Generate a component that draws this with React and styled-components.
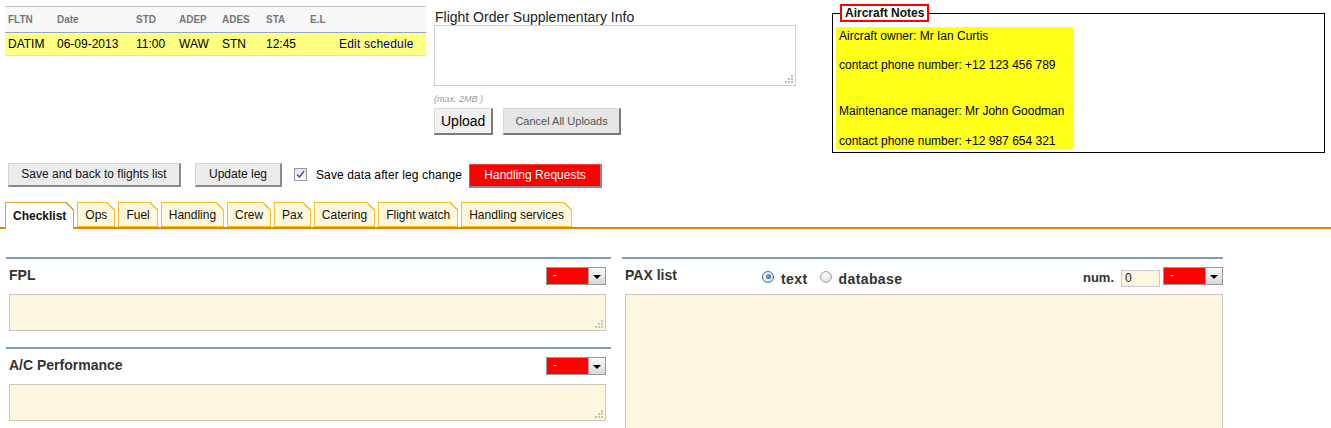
import styled, { createGlobalStyle } from "styled-components";

const GlobalStyle = createGlobalStyle`
    body {
        margin: 0;
        background: #fff;
        font-family: "Liberation Sans", Arial, sans-serif;
        font-size: 12px;
        color: #000;
    }
`;

const Page = styled.div`
    width: 1331px;
    height: 428px;
    overflow: hidden;
`;

const TopRow = styled.div`
    display: flex;
    align-items: flex-start;
    padding-left: 5px;
`;

const FlightTable = styled.div`
    width: 421px;
    margin-top: 6px;
    border-top: 1px solid #c4c4c4;
`;

const cols = "49px 79px 43px 43px 44px 44px 29px 1fr";

const HeadRow = styled.div`
    display: grid;
    grid-template-columns: ${cols};
    height: 25px;
    align-items: center;
    background: #f8f8f8;
    color: #777;
    font-weight: bold;
    font-size: 10px;
    border-bottom: 1px solid #8fa8c8;
`;

const DataRow = styled.div`
    display: grid;
    grid-template-columns: ${cols};
    height: 22px;
    align-items: center;
    background: #ffff80;
    border-bottom: 1px solid #dcdcdc;
    font-size: 12px;
`;

const Cell = styled.div`
    padding-left: 3px;
    white-space: nowrap;
    color: ${(p) => (p.$link ? "#000080" : "inherit")};
    letter-spacing: ${(p) => (p.$link ? "0.2px" : "0")};
`;

const Supplement = styled.div`
    width: 362px;
    margin-left: 8px;
    margin-top: 9px;
`;

const SupLabel = styled.div`
    font-size: 14px;
    line-height: 16px;
    color: #222;
    padding-left: 1px;
`;

const Area = styled.div`
    position: relative;
    box-sizing: border-box;
    width: 100%;
    height: ${(p) => p.$h}px;
    border: 1px solid ${(p) => (p.$cream ? "#cbc7bd" : "#d0d0d0")};
    background: ${(p) => (p.$cream ? "#fff6e0" : "#fff")};
`;

const Grip = styled.svg`
    position: absolute;
    right: 2px;
    bottom: 2px;
`;

const MaxNote = styled.div`
    margin-top: 8px;
    font-size: 9px;
    line-height: 11px;
    font-style: italic;
    color: #999;
`;

const UploadRow = styled.div`
    display: flex;
    gap: 10px;
    margin-top: 3px;
`;

const UploadButton = styled.button`
    height: 27px;
    padding: 0 ${(p) => (p.$small ? "11px" : "6px")};
    font-family: inherit;
    font-size: ${(p) => (p.$small ? "11px" : "14px")};
    color: ${(p) => (p.$small ? "#555" : "#000")};
    background: ${(p) => (p.$small ? "#e6e6e6" : "#f2f2f2")};
    border: 1px solid #d8d8d8;
    border-right: 2px solid #7a7a7a;
    border-bottom: 2px solid #7a7a7a;
`;

const Notes = styled.fieldset`
    box-sizing: border-box;
    width: 493px;
    margin: 4px 0 0 36px;
    padding: 5px 3px 3px 3px;
    border: 1px solid #000;
`;

const NotesLegend = styled.legend`
    margin-left: 4px;
    padding: 0 3px;
    border: 2px solid #f00;
    font-weight: bold;
    font-size: 12px;
    line-height: 14px;
    color: #111;
`;

const NotesBox = styled.div`
    width: 237px;
    height: 122px;
    box-sizing: border-box;
    padding: 2px 3px 0;
    background: #ffff18;
`;

const NoteLine = styled.div`
    line-height: 15px;
    margin-top: ${(p) => p.$gap || 0}px;
    white-space: nowrap;
`;

const ActionBar = styled.div`
    display: flex;
    align-items: center;
    height: 25px;
    margin-top: 9px;
    padding-left: 8px;
`;

const GrayButton = styled.button`
    box-sizing: border-box;
    height: 24px;
    width: ${(p) => p.$w}px;
    margin-right: ${(p) => p.$mr || 0}px;
    padding: 0;
    font-family: inherit;
    font-size: 12px;
    color: #111;
    background: #ececec;
    border: 1px solid #d4d4d4;
    border-right: 2px solid #8a8a8a;
    border-bottom: 2px solid #8a8a8a;
`;

const CheckLabel = styled.label`
    display: flex;
    align-items: center;
    gap: 9px;
    margin-right: 7px;
    font-size: 12px;
    letter-spacing: 0.1px;
`;

const CheckBox = styled.span`
    box-sizing: border-box;
    width: 13px;
    height: 13px;
    border: 1px solid #9a9a9a;
    background: linear-gradient(#e6e6e6, #fff);
    display: flex;
    align-items: center;
    justify-content: center;
`;

const RedButton = styled.button`
    box-sizing: border-box;
    width: 133px;
    height: 24px;
    margin-top: 2px;
    padding: 0;
    font-family: inherit;
    font-size: 12px;
    color: #fff;
    background: #ff0000;
    border: 1px solid #ff4040;
    border-right: 2px solid #8a8a8a;
    border-bottom: 2px solid #8a8a8a;
`;

const TabBar = styled.div`
    display: flex;
    align-items: flex-end;
    gap: 3px;
    height: 27px;
    margin-top: 13px;
    padding-left: 5px;
    border-bottom: 2px solid #e08800;
`;

const Tab = styled.div`
    position: relative;
    box-sizing: border-box;
    height: ${(p) => (p.$active ? 27 : 25)}px;
    margin-bottom: ${(p) => (p.$active ? -2 : 0)}px;
    padding: 0 7px;
    display: flex;
    align-items: center;
    font-size: 12px;
    font-weight: ${(p) => (p.$active ? "bold" : "normal")};
    color: #111;
    background: ${(p) => (p.$active ? "#fff" : "#fff8dc")};
    border: 1px solid ${(p) => (p.$active ? "#e0a030" : "#f4c030")};
    border-bottom: ${(p) => (p.$active ? "none" : "1px solid #f4c030")};
    &::after {
        content: "";
        position: absolute;
        top: -1px;
        right: -1px;
        width: 8px;
        height: 8px;
        background: linear-gradient(
            to top right,
            transparent calc(50% - 1px),
            ${(p) => (p.$active ? "#e0a030" : "#f4c030")} calc(50% - 1px),
            ${(p) => (p.$active ? "#e0a030" : "#f4c030")} calc(50% + 0.5px),
            #fff calc(50% + 0.5px)
        );
    }
`;

const Content = styled.div`
    display: grid;
    grid-template-columns: 605px 601px;
    column-gap: 11px;
    margin-top: 28px;
    padding-left: 6px;
    align-items: start;
`;

const Section = styled.div`
    border-top: 2px solid #7f9dba;
    padding: 0 ${(p) => (p.$right ? 0 : 5)}px 0 3px;
    margin-bottom: 16px;
`;

const SectionHead = styled.div`
    display: flex;
    align-items: center;
    height: 35px;
`;

const Title = styled.div`
    font-weight: bold;
    font-size: 14px;
    color: #333;
    margin-top: -3px;
    flex: ${(p) => (p.$grow ? 1 : "none")};
    width: ${(p) => (p.$w ? `${p.$w}px` : "auto")};
`;

const Options = styled.div`
    display: flex;
    align-items: center;
    padding-top: 5px;
    flex: 1;
    font-weight: bold;
    font-size: 14px;
    letter-spacing: 0.4px;
    color: #333;
`;

const Radio = styled.span`
    box-sizing: border-box;
    width: 12px;
    height: 12px;
    border-radius: 50%;
    border: 1px solid ${(p) => (p.$on ? "#4f6f8f" : "#a8a8a8")};
    background: radial-gradient(circle at 40% 35%, #fff, #d4d4d4);
    display: inline-flex;
    align-items: center;
    justify-content: center;
    margin: -5px 7px 0 ${(p) => p.$ml || 0}px;
    &::after {
        content: "";
        width: 5px;
        height: 5px;
        border-radius: 50%;
        background: ${(p) => (p.$on ? "radial-gradient(circle at 40% 35%, #6ab0e8, #1b5c9a)" : "transparent")};
    }
`;

const NumLabel = styled.span`
    font-weight: bold;
    font-size: 13px;
    color: #333;
    margin-right: 7px;
    padding-top: 2px;
`;

const NumInput = styled.div`
    box-sizing: border-box;
    width: 39px;
    height: 17px;
    margin-top: 3px;
    margin-right: 3px;
    padding-left: 3px;
    border: 1px solid #ccc;
    background: #fff6e0;
    font-size: 12px;
    line-height: 15px;
    color: #222;
`;

const Select = styled.div`
    box-sizing: border-box;
    display: flex;
    width: 60px;
    height: 18px;
    margin-top: -1px;
    border: 1px solid #999;
    background: #f00;
`;

const SelectValue = styled.div`
    flex: 1;
    color: #fff;
    font-size: 12px;
    line-height: 14px;
    padding-left: 6px;
`;

const SelectArrow = styled.div`
    width: 16px;
    border-left: 1px solid #aaa;
    background: linear-gradient(#fafafa, #d8d8d8);
    display: flex;
    align-items: center;
    justify-content: center;
    &::before {
        content: "";
        border-left: 4px solid transparent;
        border-right: 4px solid transparent;
        border-top: 4px solid #000;
        margin-top: 1px;
    }
`;

const Dropdown = () => (
    <Select>
        <SelectValue>-</SelectValue>
        <SelectArrow />
    </Select>
);

const TextArea = ({ h, cream = true }) => (
    <Area $h={h} $cream={cream}>
        <Grip width="9" height="9" viewBox="0 0 9 9">
            <g fill={cream ? "#c8c4b8" : "#bbb"}>
                <rect x="7" y="1" width="2" height="2" />
                <rect x="4" y="4" width="2" height="2" />
                <rect x="7" y="4" width="2" height="2" />
                <rect x="1" y="7" width="2" height="2" />
                <rect x="4" y="7" width="2" height="2" />
                <rect x="7" y="7" width="2" height="2" />
            </g>
        </Grip>
    </Area>
);

const tabs = [
    { label: "Checklist", active: true },
    { label: "Ops" },
    { label: "Fuel" },
    { label: "Handling" },
    { label: "Crew" },
    { label: "Pax" },
    { label: "Catering" },
    { label: "Flight watch" },
    { label: "Handling services" },
];

const header = ["FLTN", "Date", "STD", "ADEP", "ADES", "STA", "E.L", ""];
const flight = ["DATIM", "06-09-2013", "11:00", "WAW", "STN", "12:45", ""];

const App = () => {
    return (
        <>
            <GlobalStyle />
            <Page>
                <TopRow>
                    <FlightTable>
                        <HeadRow>
                            {header.map((h, i) => <Cell key={i}>{h}</Cell>)}
                        </HeadRow>
                        <DataRow>
                            {flight.map((v, i) => <Cell key={i}>{v}</Cell>)}
                            <Cell $link>Edit schedule</Cell>
                        </DataRow>
                    </FlightTable>

                    <Supplement>
                        <SupLabel>Flight Order Supplementary Info</SupLabel>
                        <TextArea h={61} cream={false} />
                        <MaxNote>(max. 2MB )</MaxNote>
                        <UploadRow>
                            <UploadButton>Upload</UploadButton>
                            <UploadButton $small>Cancel All Uploads</UploadButton>
                        </UploadRow>
                    </Supplement>

                    <Notes>
                        <NotesLegend>Aircraft Notes</NotesLegend>
                        <NotesBox>
                            <NoteLine>Aircraft owner: Mr Ian Curtis</NoteLine>
                            <NoteLine $gap={14}>contact phone number: +12 123 456 789</NoteLine>
                            <NoteLine $gap={31}>Maintenance manager: Mr John Goodman</NoteLine>
                            <NoteLine $gap={15}>contact phone number: +12 987 654 321</NoteLine>
                        </NotesBox>
                    </Notes>
                </TopRow>

                <ActionBar>
                    <GrayButton $w={173} $mr={14}>Save and back to flights list</GrayButton>
                    <GrayButton $w={87} $mr={12}>Update leg</GrayButton>
                    <CheckLabel>
                        <CheckBox>
                            <svg width="9" height="9" viewBox="0 0 9 9">
                                <path d="M1 4.5 L3.5 7 L8 1" fill="none" stroke="#4b5e96" strokeWidth="1.6" />
                            </svg>
                        </CheckBox>
                        Save data after leg change
                    </CheckLabel>
                    <RedButton>Handling Requests</RedButton>
                </ActionBar>

                <TabBar>
                    {tabs.map((t) => (
                        <Tab key={t.label} $active={t.active}>{t.label}</Tab>
                    ))}
                </TabBar>

                <Content>
                    <div>
                        <Section>
                            <SectionHead>
                                <Title $grow>FPL</Title>
                                <Dropdown />
                            </SectionHead>
                            <TextArea h={37} />
                        </Section>
                        <Section>
                            <SectionHead>
                                <Title $grow>A/C Performance</Title>
                                <Dropdown />
                            </SectionHead>
                            <TextArea h={37} />
                        </Section>
                    </div>
                    <div>
                        <Section $right>
                            <SectionHead>
                                <Title $w={137}>PAX list</Title>
                                <Options>
                                    <Radio $on />text
                                    <Radio $ml={12} />database
                                </Options>
                                <NumLabel>num.</NumLabel>
                                <NumInput>0</NumInput>
                                <Dropdown />
                            </SectionHead>
                            <TextArea h={200} />
                        </Section>
                    </div>
                </Content>
            </Page>
        </>
    );
};

export default App;
